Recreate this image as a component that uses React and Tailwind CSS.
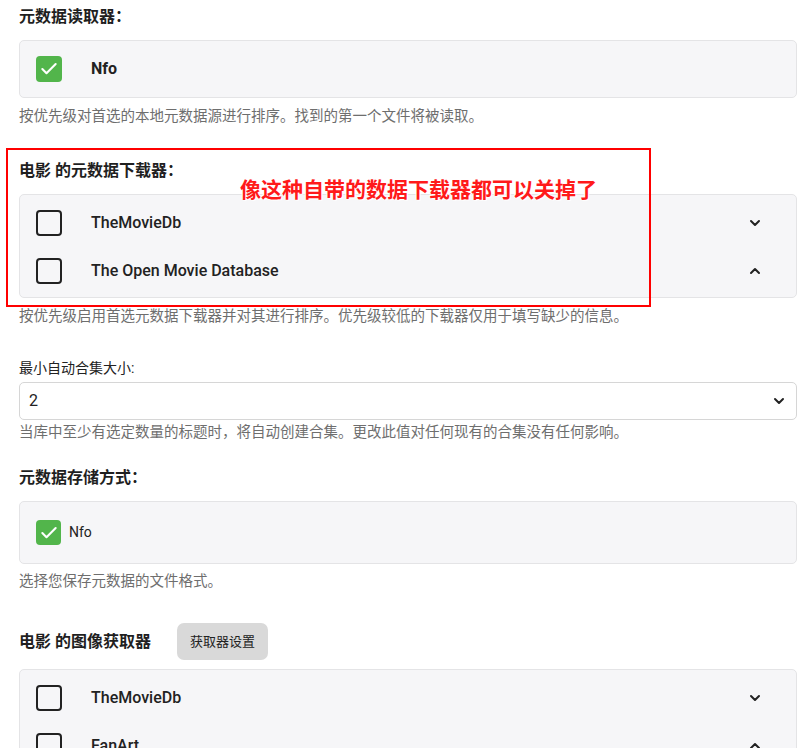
import { ChevronDown, ChevronUp, Check } from 'lucide-react';

const font = { fontFamily: 'Roboto, "Noto Sans", "Noto Sans CJK SC", sans-serif' };

function CheckedBox({ size = 'w-[26px] h-[26px]' }) {
  return (
    <div className={`${size} shrink-0 rounded-[4px] bg-[#52b54b] flex items-center justify-center`}>
      <Check size={20} strokeWidth={2.5} className="text-white" />
    </div>
  );
}

function EmptyBox() {
  return <div className="w-[26px] h-[26px] shrink-0 rounded-[4px] border-2 border-[#222]" />;
}

function SortRow({ name, up }) {
  return (
    <div className="h-[48px] flex items-center pl-[16px] pr-[33px]">
      <EmptyBox />
      <span className="ml-[29px] text-[16px] font-medium text-[#222]">{name}</span>
      <span className="ml-auto text-[#222]">
        {up ? <ChevronUp size={16} strokeWidth={3} /> : <ChevronDown size={16} strokeWidth={3} />}
      </span>
    </div>
  );
}

function Help({ children, className = '' }) {
  return <p className={`text-[14.5px] leading-[20px] text-[#6e6e6e] ${className}`}>{children}</p>;
}

function Heading({ children, className = '' }) {
  return <h3 className={`text-[16px] leading-[24px] font-bold text-[#1f1f1f] ${className}`}>{children}</h3>;
}

export default function App() {
  return (
    <div className="relative w-[810px] h-[748px] overflow-hidden bg-white" style={font}>
      <div className="px-[19px] pt-[5px] pr-[13px]">
        {/* 元数据读取器 */}
        <Heading>元数据读取器：</Heading>
        <div className="mt-[11px] bg-[#f6f6f8] border border-[#e4e4e6] rounded-[5px] px-[16px] py-[15px] flex items-center">
          <CheckedBox />
          <span className="ml-[29px] text-[16px] font-bold text-[#222]">Nfo</span>
        </div>
        <Help className="mt-[9px]">按优先级对首选的本地元数据源进行排序。找到的第一个文件将被读取。</Help>

        {/* 元数据下载器 */}
        <Heading className="mt-[32px]">电影 的元数据下载器：</Heading>
        <div className="mt-[11px] bg-[#f6f6f8] border border-[#e4e4e6] rounded-[5px] pt-[4px] pb-[2px]">
          <SortRow name="TheMovieDb" />
          <SortRow name="The Open Movie Database" up />
        </div>
        <Help className="mt-[9px]">按优先级启用首选元数据下载器并对其进行排序。优先级较低的下载器仅用于填写缺少的信息。</Help>

        {/* 合集大小 */}
        <label className="block mt-[31px] text-[14px] leading-[20px] text-[#222]">最小自动合集大小:</label>
        <div className="mt-[4px] h-[38px] bg-white border border-[#d6d6d6] rounded-[5px] flex items-center pl-[9px] pr-[9px]">
          <span className="text-[16px] text-[#222]">2</span>
          <ChevronDown size={16} strokeWidth={3} className="ml-auto text-[#222]" />
        </div>
        <Help className="mt-[3px]">当库中至少有选定数量的标题时，将自动创建合集。更改此值对任何现有的合集没有任何影响。</Help>

        {/* 存储方式 */}
        <Heading className="mt-[23px]">元数据存储方式：</Heading>
        <div className="mt-[11px] h-[63px] bg-[#f6f6f8] border border-[#e4e4e6] rounded-[5px] px-[16px] flex items-center">
          <CheckedBox size="w-[25px] h-[25px]" />
          <span className="ml-[8px] text-[14px] text-[#222]">Nfo</span>
        </div>
        <Help className="mt-[8px]">选择您保存元数据的文件格式。</Help>

        {/* 图像获取器 */}
        <div className="mt-[31px] flex items-center">
          <Heading>电影 的图像获取器</Heading>
          <button className="ml-[26px] h-[37px] px-[13px] rounded-[7px] bg-[#d9d9d9] text-[13px] text-[#222]">
            获取器设置
          </button>
        </div>
        <div className="mt-[9px] bg-[#f6f6f8] border border-[#e4e4e6] rounded-[5px] pt-[4px]">
          <SortRow name="TheMovieDb" />
          <SortRow name="FanArt" up />
        </div>
      </div>

      {/* 标注 */}
      <div className="absolute left-[6px] top-[148px] w-[645px] h-[159px] border-2 border-[#ff0000] pointer-events-none" />
      <div
        className="absolute left-[240px] top-[176px] text-[21px] leading-[28px] font-bold text-[#ff1a1a]"
        style={{ textShadow: '0 0 2px #fff, 0 0 2px #fff, 1px 1px 1px #fff, -1px -1px 1px #fff' }}
      >
        像这种自带的数据下载器都可以关掉了
      </div>
    </div>
  );
}
